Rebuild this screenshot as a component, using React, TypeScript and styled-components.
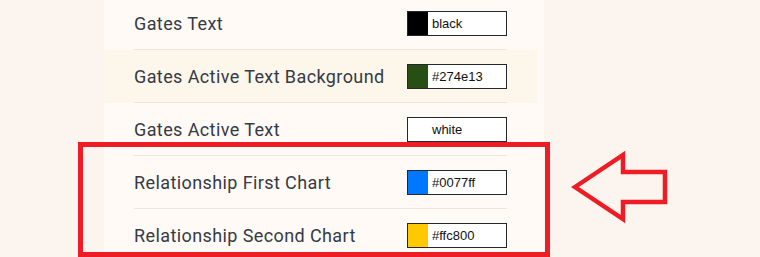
import React, { FC } from "react";
import styled, { createGlobalStyle } from "styled-components";

const colors = {
  page: "#fcf4ee",
  panel: "#fffaf6",
  active: "#fdf6ea",
  line: "#ebe6e1",
  label: "#343a46",
  red: "#ee1d25",
};

const settings = [
  { name: "Gates Text", value: "black", swatch: "#000000" },
  { name: "Gates Active Text Background", value: "#274e13", swatch: "#274e13", active: true },
  { name: "Gates Active Text", value: "white", swatch: "#ffffff" },
  { name: "Relationship First Chart", value: "#0077ff", swatch: "#0077ff" },
  { name: "Relationship Second Chart", value: "#ffc800", swatch: "#ffc800" },
];

const GlobalStyle = createGlobalStyle`
  html, body {
    margin: 0;
    padding: 0;
    background: ${colors.page};
  }
`;

interface RowProps {
  name: string;
  value: string;
  swatch: string;
  active?: boolean;
}

const SettingRow: FC<RowProps> = ({ name, value, swatch, active }) => (
  <Row $active={active}>
    <RowInner>
      <Label>{name}</Label>
      <ColorField>
        <Swatch $color={swatch} />
        <ColorValue>{value}</ColorValue>
      </ColorField>
    </RowInner>
  </Row>
);

const App: FC = () => {
  return (
    <>
      <GlobalStyle />
      <Page>
        <Panel>
          <List>
            {settings.map((item) => (
              <SettingRow key={item.name} {...item} />
            ))}
          </List>
        </Panel>

        {/* annotation */}
        <Highlight />
        <Arrow width="110" height="80" viewBox="0 0 110 80">
          <polygon
            points="6,40 54,8 54,25 96,25 96,55 54,55 54,72"
            fill="none"
            stroke={colors.red}
            strokeWidth="4.5"
            strokeLinejoin="miter"
          />
        </Arrow>
      </Page>
    </>
  );
};

const Page = styled.div`
  position: relative;
  width: 760px;
  height: 257px;
  overflow: hidden;
  background: ${colors.page};
`;

const Panel = styled.div`
  width: 440px;
  height: 100%;
  margin-left: 104px;
  background: ${colors.panel};
`;

const List = styled.ul`
  list-style: none;
  margin: -3px 0 0;
  padding: 0;
  width: 433px;
`;

const Row = styled.li<{ $active?: boolean }>`
  padding: 0 30px;
  background: ${(p) => (p.$active ? colors.active : "transparent")};
`;

const RowInner = styled.div`
  height: 52px;
  display: flex;
  align-items: center;
  justify-content: space-between;
  border-bottom: 1px solid ${colors.line};
`;

const Label = styled.span`
  font-family: Roboto, "Noto Sans", sans-serif;
  font-size: 18px;
  letter-spacing: 0.4px;
  color: ${colors.label};
`;

const ColorField = styled.div`
  width: 100px;
  height: 25px;
  box-sizing: border-box;
  border: 1.5px solid #23282d;
  background: #fff;
  display: flex;
  align-items: center;
`;

const Swatch = styled.div<{ $color: string }>`
  width: 20px;
  height: 100%;
  background: ${(p) => p.$color};
`;

const ColorValue = styled.span`
  margin-left: 4px;
  font-family: "Liberation Sans", Arial, sans-serif;
  font-size: 13px;
  color: #111;
`;

const Highlight = styled.div`
  position: absolute;
  left: 78px;
  top: 142px;
  width: 472px;
  height: 115px;
  box-sizing: border-box;
  border: 5px solid ${colors.red};
`;

const Arrow = styled.svg`
  position: absolute;
  left: 569px;
  top: 147px;
`;

export default App;
